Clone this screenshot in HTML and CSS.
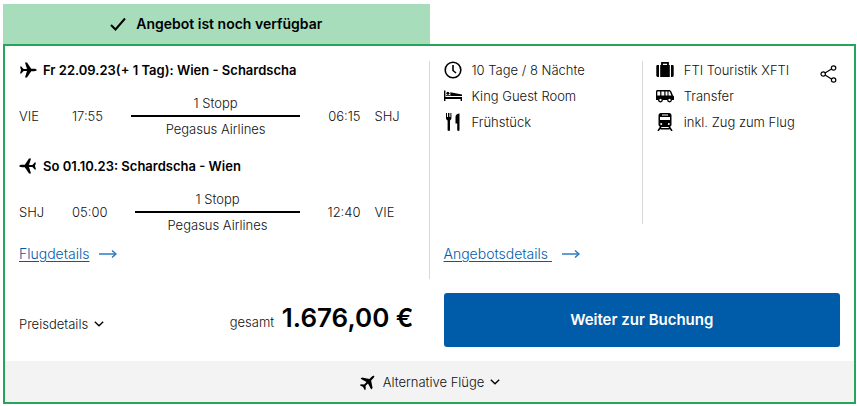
FILE: index.html
```html
<!DOCTYPE html>
<html lang="de">
<head>
<meta charset="utf-8">
<meta name="viewport" content="width=device-width, initial-scale=1">
<title>Reiseangebot</title>
<link rel="stylesheet" href="styles.css">
</head>
<body>
<svg class="sprite" aria-hidden="true">
  <symbol id="plane" viewBox="0 0 18 18">
    <path d="M1 5.500h1.300L4.600 8H8L6 1.500h2L12.200 7.800h2.800c1.900 0 2.700.6 2.700 1.200s-.8 1.200-2.700 1.200h-2.800L8 16.500H6L8 10H4.600l-2.300 2.500H1L2 9z"/>
  </symbol>
  <symbol id="arrow" viewBox="0 0 18 10">
    <path d="M0 5h16" fill="none" stroke="#5f9dd2" stroke-width="2"/>
    <path d="M13 1.500l4 3.500-4 3.500" fill="none" stroke="#2c78b8" stroke-width="1.500"/>
  </symbol>
  <symbol id="chevron" viewBox="0 0 10 6">
    <path d="M.8.8L5 4.800 9.200.8" fill="none" stroke="#000" stroke-width="1.400"/>
  </symbol>
</svg>

<main class="offer">
  <p class="status">
    <svg class="check" viewBox="0 0 16 14" aria-hidden="true"><path d="M1 8l4.500 4.500L15 1.500" fill="none" stroke="#000" stroke-width="2"/></svg>
    Angebot ist noch verfügbar
  </p>

  <article class="card">
    <div class="columns">
      <section class="flights">
        <h2 class="title"><svg class="icon"><use href="#plane"/></svg>Fr 22.09.23(+ 1 Tag): Wien - Schardscha</h2>
        <div class="leg">
          <span class="from">VIE</span>
          <span>17:55</span>
          <div class="route"><span>1 Stopp</span><hr class="line"><span>Pegasus Airlines</span></div>
          <span>06:15</span>
          <span class="to">SHJ</span>
        </div>
        <h2 class="title"><svg class="icon back"><use href="#plane"/></svg>So 01.10.23: Schardscha - Wien</h2>
        <div class="leg">
          <span class="from">SHJ</span>
          <span>05:00</span>
          <div class="route"><span>1 Stopp</span><hr class="line"><span>Pegasus Airlines</span></div>
          <span>12:40</span>
          <span class="to">VIE</span>
        </div>
        <p class="more"><a href="#flug">Flugdetails</a><svg class="arrow"><use href="#arrow"/></svg></p>
      </section>

      <section class="details">
        <div class="facts">
          <ul class="list">
            <li>
              <svg class="icon" viewBox="0 0 18 18"><circle cx="9" cy="9" r="7.800" fill="none" stroke="#000" stroke-width="1.600"/><path d="M9 4v5.500l3 2.500" fill="none" stroke="#000" stroke-width="1.600"/></svg>
              10 Tage / 8 Nächte
            </li>
            <li>
              <svg class="icon" viewBox="0 0 18 18"><path d="M0 3.500h1.400V10H18v4h-1.400v-2H1.400v2H0z"/><path d="M6.300 5.200L18 7.500V9H6.300z"/><circle cx="3.900" cy="6.300" r="1.500"/><path d="M2 8.200h4V9H2z"/></svg>
              King Guest Room
            </li>
            <li>
              <svg class="icon" viewBox="0 0 18 18"><path d="M2 0h1v4h1V0h1.400v4h1V0h1v5c0 1.500-.7 2-1.400 2.400V17c0 1.200-2.400 1.200-2.400 0V7.400C2.700 7 2 6.500 2 5z"/><path d="M15.500.5V17c0 1.200-2.300 1.200-2.300 0v-6.500H11.500V4c0-2 1.700-3.500 4-3.500z"/></svg>
              Frühstück
            </li>
          </ul>
          <ul class="list second">
            <li>
              <svg class="icon" viewBox="0 0 18 18"><path d="M6 4V1.800h6V4" fill="none" stroke="#000" stroke-width="1.800"/><path d="M4.200 4h9.600v12H4.200zM1.800 4H3v12H1.800C.8 16 .3 15.500.3 14.600V5.400C.3 4.500.8 4 1.800 4zM15 4h1.200c1 0 1.500.5 1.500 1.400v9.200c0 .9-.5 1.400-1.500 1.400H15z"/></svg>
              FTI Touristik XFTI
            </li>
            <li>
              <svg class="icon" viewBox="0 0 18 18"><path d="M1.500 3H13c1 0 1.800.6 2.300 1.600L17 8.500l1 1V13H0V4.500C0 3.600.6 3 1.500 3z"/><path d="M1.300 4.500h2.900v4H1.300zM5.400 4.500h2.900v4H5.400zM9.500 4.500h2v4h-2zM12.500 4.500h1.200l1.700 4h-2.900z" fill="#fff"/><g fill="#fff" stroke="#000" stroke-width="1.300"><circle cx="4.500" cy="13" r="1.800"/><circle cx="13.500" cy="13" r="1.800"/></g></svg>
              Transfer
            </li>
            <li>
              <svg class="icon" viewBox="0 0 18 18"><path d="M5 0h8c1.600 0 2.500 1 2.500 2.500v9c0 1.500-1 2.500-2.500 2.500H5c-1.500 0-2.500-1-2.500-2.500v-9C2.500 1 3.400 0 5 0z"/><path d="M6 1.400h6v1H6zM4 4h10v3H4z" fill="#fff"/><g fill="#fff"><circle cx="5.200" cy="11" r="1"/><circle cx="12.800" cy="11" r="1"/></g><path d="M5 13.500l-3 4.500M13 13.500l3 4.500M4.500 15.700h9" fill="none" stroke="#000" stroke-width="1.500"/></svg>
              inkl. Zug zum Flug
            </li>
          </ul>
          <button class="share" type="button" aria-label="Teilen">
            <svg viewBox="0 0 18 18"><g fill="none" stroke="#000" stroke-width="1.200"><path d="M5 7.900l6.500-4M5 10l6.500 4"/><circle cx="3.200" cy="9" r="2.200"/><circle cx="13.600" cy="3" r="2.200"/><circle cx="13.600" cy="15" r="2.200"/></g></svg>
          </button>
        </div>
        <p class="more"><a href="#angebot">Angebotsdetails&nbsp;</a><svg class="arrow"><use href="#arrow"/></svg></p>
      </section>
    </div>

    <div class="columns pricing">
      <div class="price">
        <button class="toggle" type="button">Preisdetails<svg class="chevron"><use href="#chevron"/></svg></button>
        <p class="total">gesamt <strong>1.676,00 €</strong></p>
      </div>
      <div class="action"><button class="book" type="button">Weiter zur Buchung</button></div>
    </div>

    <button class="alternatives" type="button"><svg class="icon tilted"><use href="#plane"/></svg>Alternative Flüge<svg class="chevron"><use href="#chevron"/></svg></button>
  </article>
</main>
</body>
</html>
```
FILE: styles.css
```css
* {
  box-sizing: border-box;
  margin: 0;
  padding: 0;
}

body {
  background: #fff;
  color: #111;
  font: 300 13px/20px Inter, "Liberation Sans", sans-serif;
}

button {
  border: 0;
  background: none;
  color: inherit;
  font: inherit;
  cursor: pointer;
}

svg {
  flex: none;
}

.sprite {
  display: none;
}

.offer {
  padding: 4px 1px 2px 3px;
}

.status {
  display: flex;
  align-items: center;
  justify-content: center;
  gap: 10px;
  width: 50%;
  height: 40px;
  background: #a8ddbc;
  color: #000;
  font-size: 14px;
  font-weight: 600;
}

.check {
  width: 16px;
  height: 14px;
}

.card {
  border: 2px solid #27a35b;
}

.columns {
  display: grid;
  grid-template-columns: 1fr 1fr;
  padding-top: 15px;
}

.flights {
  padding: 0 14px 16px;
  border-right: 1px solid #d8d8d8;
}

.title {
  display: flex;
  align-items: center;
  gap: 6px;
  margin-bottom: 14px;
  color: #000;
  font-size: 13px;
  font-weight: 600;
  line-height: 18px;
}

.icon {
  width: 18px;
  height: 18px;
}

.back {
  transform: scaleX(-1);
}

.leg {
  display: flex;
  align-items: center;
  margin-bottom: 18px;
}

.from {
  width: 53px;
}

.to {
  width: 40px;
  margin-left: 14px;
}

.route {
  flex: 1;
  margin: 0 28px;
  text-align: center;
}

.route span {
  display: block;
}

.line {
  height: 2px;
  margin: 2px 0;
  border: 0;
  background: #000;
}

.more {
  display: flex;
  align-items: center;
  gap: 10px;
  font-size: 14px;
  line-height: 18px;
}

.flights .more {
  margin-top: -8px;
}

.more a {
  color: #005ca9;
  font-weight: 300;
  text-underline-offset: 2px;
}

.arrow {
  width: 18px;
  height: 10px;
}

.details {
  display: flex;
  flex-direction: column;
  gap: 21px;
  padding: 0 14px 16px;
}

.facts {
  position: relative;
  display: grid;
  grid-template-columns: 1fr 1fr;
  flex: 1;
}

.list {
  list-style: none;
}

.list li {
  display: flex;
  align-items: center;
  gap: 10px;
  height: 18px;
  margin-bottom: 8px;
}

.second {
  padding-left: 13px;
  border-left: 1px solid #d8d8d8;
}

.share {
  position: absolute;
  top: 4px;
  right: 2px;
  width: 18px;
  height: 18px;
}

.share svg {
  display: block;
}

.pricing {
  padding: 14px 0;
}

.price {
  display: flex;
  align-items: center;
  justify-content: space-between;
  padding: 0 16px 0 14px;
}

.toggle {
  display: flex;
  align-items: center;
  gap: 6px;
  padding-top: 8px;
}

.chevron {
  width: 10px;
  height: 6px;
}

.total strong {
  margin-left: 4px;
  color: #000;
  font-size: 26px;
  font-weight: 600;
}

.action {
  padding: 0 14px;
}

.book {
  width: 100%;
  height: 54px;
  border-radius: 3px;
  background: #005ca9;
  color: #fff;
  font-size: 15px;
  font-weight: 600;
}

.alternatives {
  display: flex;
  align-items: center;
  justify-content: center;
  gap: 6px;
  width: 100%;
  height: 41px;
  background: #f3f3f3;
}

.tilted {
  transform: rotate(-45deg);
}
```
